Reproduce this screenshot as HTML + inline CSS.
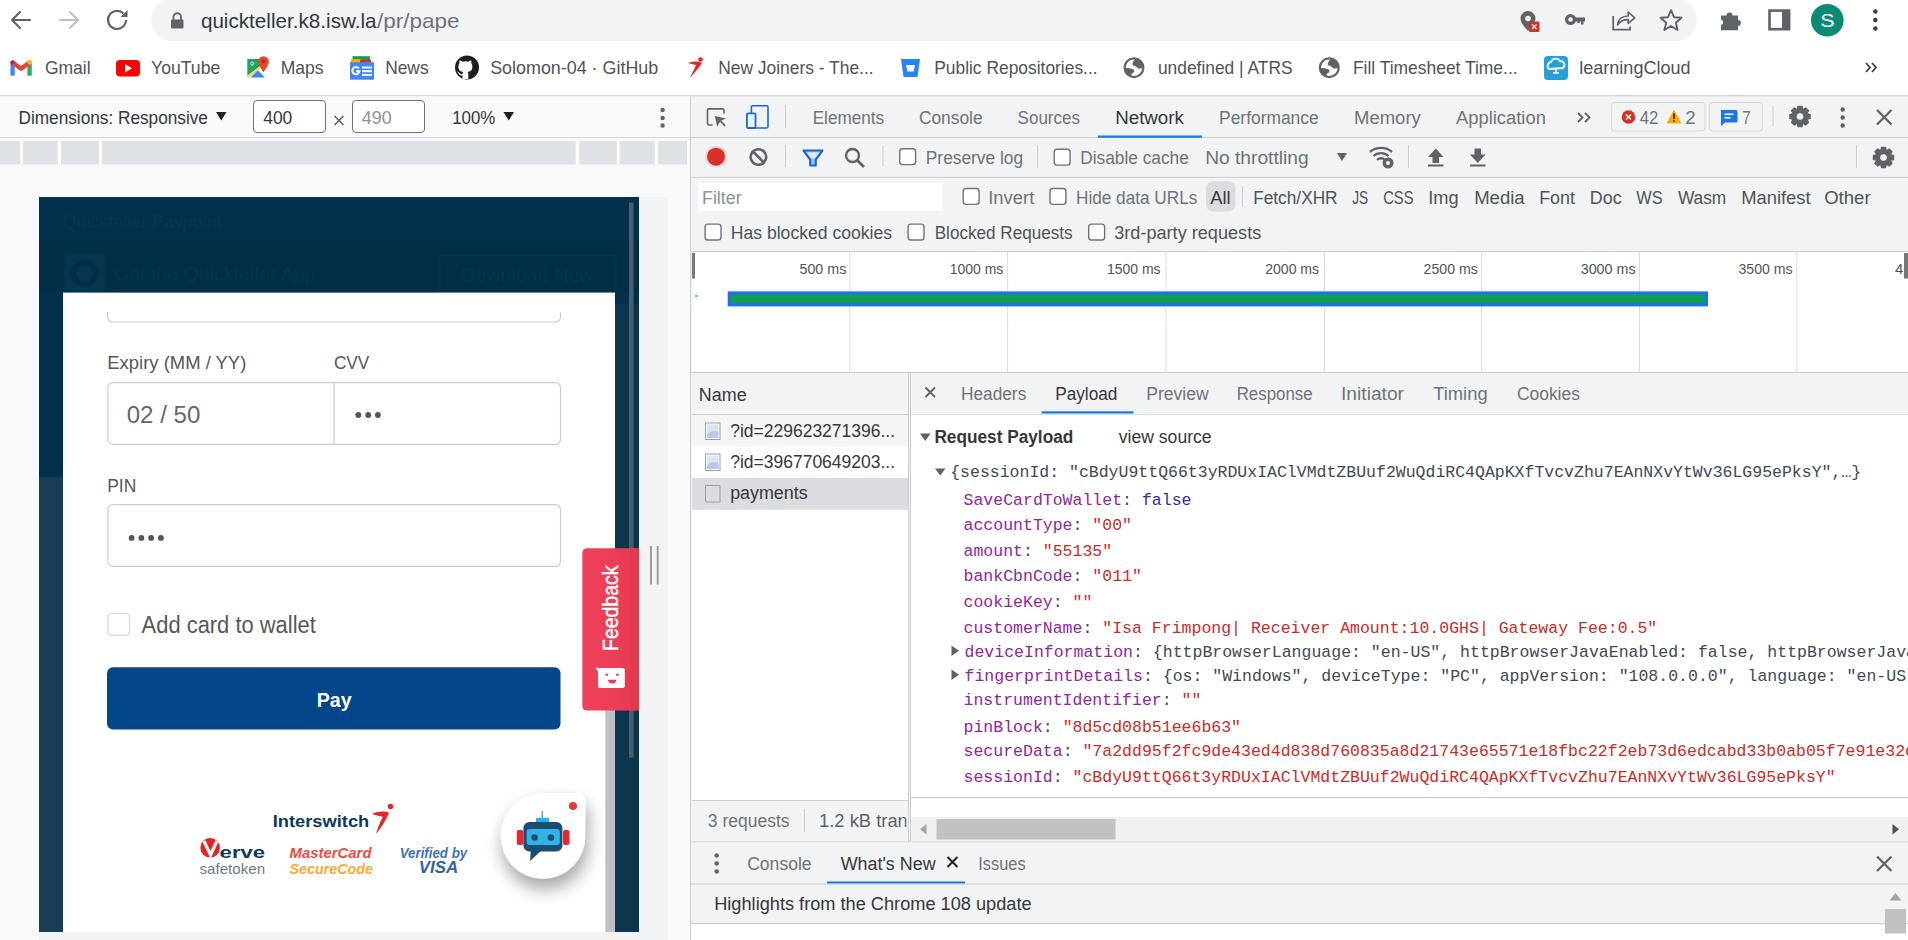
<!DOCTYPE html>
<html><head><meta charset="utf-8"><title>quickteller - DevTools</title>
<style>
html,body{margin:0;padding:0;width:1908px;height:940px;overflow:hidden;background:#fff;}
svg{display:block;font-family:"Liberation Sans",sans-serif;}
</style></head>
<body>
<div id="app" style="position:relative;width:1908px;height:940px;overflow:hidden">
<svg width="1908" height="940" viewBox="0 0 1908 940">
<rect x="0" y="0" width="1908" height="96" fill="#ffffff"/>
<rect x="151" y="-1" width="1546" height="42" fill="#f1f3f4" rx="21"/>
<path d="M30 20 H13 M20 12 L12 20 L20 28" fill="none" stroke="#5f6368" stroke-width="2.2" stroke-linecap="round" stroke-linejoin="round"/>
<path d="M60 20 H77 M70 12 L78 20 L70 28" fill="none" stroke="#bdc1c6" stroke-width="2.2" stroke-linecap="round" stroke-linejoin="round"/>
<path d="M126 20 A9 9 0 1 1 123.4 13.6" fill="none" stroke="#5f6368" stroke-width="2.2"/>
<path d="M127.5 10 L127.5 17 L120.5 17 Z" fill="#5f6368"/>
<rect x="171" y="19.5" width="12.5" height="9" fill="#5f6368" rx="1.2"/>
<path d="M173.5 20 V17 A3.7 3.7 0 0 1 181 17 V20" fill="none" stroke="#5f6368" stroke-width="1.8"/>
<text x="200.9" y="28" font-size="21" fill="#36373a" textLength="175.7" lengthAdjust="spacingAndGlyphs">quickteller.k8.isw.la</text>
<text x="377.0" y="28" font-size="21" fill="#6f7377" textLength="82.6" lengthAdjust="spacingAndGlyphs">/pr/pape</text>
<path d="M1528 11 a7.5 7.5 0 0 0 -7.5 7.5 c0 5 7.5 12.5 7.5 12.5 s7.5 -7.5 7.5 -12.5 a7.5 7.5 0 0 0 -7.5 -7.5z" fill="#5f6368"/>
<circle cx="1528" cy="18.5" r="2.8" fill="#f1f3f4" />
<rect x="1529" y="21.5" width="10.5" height="10.5" fill="#d93025" rx="1"/>
<path d="M1532 24.5 l4.5 4.5 m0 -4.5 l-4.5 4.5" fill="none" stroke="#fff" stroke-width="1.3"/>
<circle cx="1570.5" cy="19.5" r="5.5" fill="#5f6368" />
<circle cx="1570.5" cy="19.5" r="2.3" fill="#f1f3f4" />
<rect x="1575" y="17.5" width="10" height="4" fill="#5f6368"/>
<rect x="1581" y="19" width="2.5" height="5.5" fill="#5f6368"/>
<rect x="1577.5" y="19" width="2.2" height="4" fill="#5f6368"/>
<path d="M1613.2 16 V29.6 H1630 V26.5" fill="none" stroke="#5f6368" stroke-width="1.8"/>
<path d="M1617.5 25 C1618 19.5 1622 16 1628.2 16 V12.2 L1634.8 17.8 L1628.2 23.4 V19.6 C1623 19.6 1619.8 21.5 1617.5 25Z" fill="none" stroke="#5f6368" stroke-width="1.6" stroke-linejoin="round"/>
<path d="M1671 10.2 L1674 17.2 L1681.5 17.8 L1675.8 22.8 L1677.6 30 L1671 26 L1664.4 30 L1666.2 22.8 L1660.5 17.8 L1668 17.2Z" fill="none" stroke="#5f6368" stroke-width="1.9" stroke-linejoin="round"/>
<path d="M1721 15.5 h5.5 a3 3 0 0 1 6 0 h5.5 v4.5 a2.9 2.9 0 0 1 0 5.8 v4.4 h-17 v-5.2 a2.8 2.8 0 0 0 0 -5.5z" fill="#5f6368"/>
<rect x="1769.5" y="10.6" width="19.6" height="18.6" fill="none" stroke="#5f6368" stroke-width="2.6"/>
<rect x="1782" y="10.6" width="7.2" height="18.6" fill="#5f6368"/>
<circle cx="1827.3" cy="20.2" r="16.3" fill="#0b8a74" />
<text x="1820.2" y="27" font-size="18" fill="#ffffff" textLength="14.4" lengthAdjust="spacingAndGlyphs">S</text>
<circle cx="1875.3" cy="11.5" r="2.3" fill="#3c4043" />
<circle cx="1875.3" cy="20" r="2.3" fill="#3c4043" />
<circle cx="1875.3" cy="28.5" r="2.3" fill="#3c4043" />
<path d="M12.6 63 V75.7" fill="none" stroke="#4285f4" stroke-width="4.3"/>
<path d="M29.6 64 V75.7" fill="none" stroke="#34a853" stroke-width="4.3"/>
<path d="M12.6 62.5 L21.1 68.8 L29.6 62.5" fill="none" stroke="#ea4335" stroke-width="4.3" stroke-linecap="round" stroke-linejoin="round"/>
<circle cx="29.6" cy="62.6" r="2.15" fill="#fbbc04" />
<circle cx="12.6" cy="62.6" r="2.15" fill="#c5221f" />
<text x="44.9" y="74" font-size="19" fill="#505356" textLength="45.7" lengthAdjust="spacingAndGlyphs">Gmail</text>
<rect x="116" y="60" width="24" height="16.5" fill="#ff0000" rx="4"/>
<path d="M125 64 L132 68.2 L125 72.4Z" fill="#fff"/>
<text x="151.0" y="74" font-size="19" fill="#505356" textLength="69.3" lengthAdjust="spacingAndGlyphs">YouTube</text>
<path d="M247.3 59 H260 V66.2 L247.3 75.8Z" fill="#1fa463"/>
<path d="M247.3 75.8 L260 66.2 L261.5 67.6 L249 77.5 H247.3Z" fill="#f6d84a"/>
<path d="M250.5 77.5 L257.8 70.2 L265 77.5Z" fill="#4285f4"/>
<path d="M263.5 56.2 a5.4 5.4 0 0 1 5.4 5.4 c0 3.6 -5.4 10.6 -5.4 10.6 s-5.4 -7 -5.4 -10.6 a5.4 5.4 0 0 1 5.4 -5.4z" fill="#ea4335"/>
<circle cx="263.5" cy="61.4" r="1.7" fill="#a52714" />
<circle cx="252.2" cy="63.6" r="1.5" fill="none" stroke="#d8f0e0" stroke-width="1"/>
<text x="280.7" y="74" font-size="19" fill="#505356" textLength="42.9" lengthAdjust="spacingAndGlyphs">Maps</text>
<rect x="352.5" y="56.2" width="17.5" height="5" fill="#0f9d58"/>
<rect x="351" y="59" width="10" height="4" fill="#f9ab00"/>
<rect x="360" y="59.5" width="11" height="4" fill="#d93025"/>
<rect x="350" y="62.2" width="24" height="17.5" fill="#4285f4"/>
<path d="M358.9 68.6 A3.6 3.6 0 1 0 359.5 71.2 H356" fill="none" stroke="#ffffff" stroke-width="2"/>
<rect x="362" y="66.5" width="10" height="2" fill="#ffffff"/>
<rect x="362" y="70.2" width="10" height="2" fill="#ffffff"/>
<rect x="362" y="73.9" width="10" height="2" fill="#ffffff"/>
<text x="385.2" y="74" font-size="19" fill="#505356" textLength="43.4" lengthAdjust="spacingAndGlyphs">News</text>
<circle cx="467" cy="67.5" r="12" fill="#1b1f23" />
<path d="M462.5 79 v-3.5 c-2.5 0.5 -3.5 -1 -4 -2.5 c-0.5 -1 -1.5 -1.3 -1.5 -1.3 c1 -0.5 2 0.5 2.5 1.3 c0.8 1.2 2 1 3 0.7 c0.1 -0.8 0.5 -1.3 0.9 -1.6 c-2.8 -0.3 -5 -1.6 -5 -5.5 c0 -1.2 0.4 -2.2 1.1 -3 c-0.2 -0.5 -0.4 -1.6 0.1 -3 c0 0 1 -0.3 3 1.1 a10 10 0 0 1 5.6 0 c2 -1.4 3 -1.1 3 -1.1 c0.5 1.4 0.3 2.5 0.1 3 c0.7 0.8 1.1 1.8 1.1 3 c0 3.9 -2.2 5.2 -5 5.5 c0.5 0.4 0.9 1.1 0.9 2.2 v4.7z" fill="#ffffff"/>
<text x="490.2" y="74" font-size="19" fill="#505356" textLength="168.0" lengthAdjust="spacingAndGlyphs">Solomon-04 · GitHub</text>
<circle cx="700.5" cy="59.5" r="2.3" fill="#e3262d" />
<path d="M688 63 C693 61 699 61 702 63 C699 68 694 73 690 78 C692 73 695 68 696 65 C693 64 690 64 688 63Z" fill="#e3262d"/>
<text x="718.2" y="74" font-size="19" fill="#505356" textLength="155.4" lengthAdjust="spacingAndGlyphs">New Joiners - The...</text>
<path d="M901 59 H920 L917.5 77 H903.5Z" fill="#2684ff"/>
<path d="M906 65 H915 L913.5 71.5 H907.5Z" fill="#fff"/>
<text x="934.2" y="74" font-size="19" fill="#505356" textLength="163.4" lengthAdjust="spacingAndGlyphs">Public Repositories...</text>
<circle cx="1134" cy="67.7" r="9.4" fill="#ffffff" stroke="#5f6368" stroke-width="2.2"/>
<path d="M1135.5 58.8 C1133.5 61 1132 63 1132.6 65.3 C1134.5 66 1136.5 66.5 1137.6 68.2 C1139 68.8 1141.5 68.7 1143.6 67.2 A9.6 9.6 0 0 0 1135.5 58.8Z" fill="#5f6368"/>
<path d="M1124.2 68 C1127 67.9 1131 68.3 1133.5 69.5 C1135 71 1134 72.6 1132 73.5 C1130.6 74.8 1130.8 76.2 1131.4 77.3 A9.6 9.6 0 0 1 1124.2 68Z" fill="#5f6368"/>
<text x="1157.9" y="74" font-size="19" fill="#505356" textLength="134.7" lengthAdjust="spacingAndGlyphs">undefined | ATRS</text>
<circle cx="1329.3" cy="67.7" r="9.4" fill="#ffffff" stroke="#5f6368" stroke-width="2.2"/>
<path d="M1330.8 58.8 C1328.8 61 1327.3 63 1327.8999999999999 65.3 C1329.8 66 1331.8 66.5 1332.8999999999999 68.2 C1334.3 68.8 1336.8 68.7 1338.8999999999999 67.2 A9.6 9.6 0 0 0 1330.8 58.8Z" fill="#5f6368"/>
<path d="M1319.5 68 C1322.3 67.9 1326.3 68.3 1328.8 69.5 C1330.3 71 1329.3 72.6 1327.3 73.5 C1325.8999999999999 74.8 1326.1 76.2 1326.7 77.3 A9.6 9.6 0 0 1 1319.5 68Z" fill="#5f6368"/>
<text x="1352.9" y="74" font-size="19" fill="#505356" textLength="164.7" lengthAdjust="spacingAndGlyphs">Fill Timesheet Time...</text>
<rect x="1544" y="56" width="24" height="24" fill="#249fdc" rx="4"/>
<path d="M1549 69 a4 4 0 0 1 2 -7 a5 5 0 0 1 9 -1 a4 4 0 0 1 3 7 z" fill="none" stroke="#fff" stroke-width="1.8"/>
<path d="M1556 69 v5 M1553 73 h6" fill="none" stroke="#fff" stroke-width="1.5"/>
<text x="1579.2" y="74" font-size="19" fill="#505356" textLength="111.4" lengthAdjust="spacingAndGlyphs">learningCloud</text>
<path d="M1866 63 l4 4.5 l-4 4.5 M1872 63 l4 4.5 l-4 4.5" fill="none" stroke="#3c4043" stroke-width="1.8"/>
<rect x="0" y="95" width="1908" height="1.6" fill="#d3d5d8"/>
<rect x="0" y="96.6" width="690" height="844" fill="#f8f9fa"/>
<rect x="39" y="197" width="629" height="760" fill="#f1f3f4"/>
<rect x="0" y="96.6" width="690" height="40.6" fill="#f8f9fa"/>
<rect x="0" y="137" width="690" height="1" fill="#dadce0"/>
<text x="18.5" y="124" font-size="18.5" fill="#36373a" textLength="189.4" lengthAdjust="spacingAndGlyphs">Dimensions: Responsive</text>
<path d="M216 112 H226.5 L221.25 120.5Z" fill="#202124"/>
<rect x="253.5" y="100.5" width="72" height="32" fill="#ffffff" rx="3.5" stroke="#6f7377" stroke-width="1"/>
<text x="263.2" y="123.6" font-size="18.5" fill="#36373a" textLength="29.1" lengthAdjust="spacingAndGlyphs">400</text>
<path d="M334.5 116 L343.5 125 M343.5 116 L334.5 125" fill="none" stroke="#5f6368" stroke-width="1.6"/>
<rect x="352.5" y="100.5" width="72" height="32" fill="#ffffff" rx="3.5" stroke="#6f7377" stroke-width="1"/>
<text x="361.8" y="123.6" font-size="18.5" fill="#8d9297" textLength="29.8" lengthAdjust="spacingAndGlyphs">490</text>
<text x="452.2" y="123.6" font-size="18.5" fill="#36373a" textLength="43.1" lengthAdjust="spacingAndGlyphs">100%</text>
<path d="M503.5 112 H514 L508.75 120.5Z" fill="#202124"/>
<circle cx="662.6" cy="110" r="2.2" fill="#5f6368" />
<circle cx="662.6" cy="118" r="2.2" fill="#5f6368" />
<circle cx="662.6" cy="125.5" r="2.2" fill="#5f6368" />
<rect x="0" y="141" width="687" height="23.5" fill="#dee1e6"/>
<rect x="20.2" y="141" width="2.8000000000000007" height="23.5" fill="#ffffff"/>
<rect x="57.8" y="141" width="3.200000000000003" height="23.5" fill="#ffffff"/>
<rect x="99" y="141" width="2.799999999999997" height="23.5" fill="#ffffff"/>
<rect x="575.8" y="141" width="3.400000000000091" height="23.5" fill="#ffffff"/>
<rect x="617" y="141" width="2.6000000000000227" height="23.5" fill="#ffffff"/>
<rect x="654.7" y="141" width="3.2999999999999545" height="23.5" fill="#ffffff"/>
<rect x="39" y="197" width="600" height="735" fill="#03304a"/>
<rect x="39" y="239" width="600" height="53" fill="#022e46"/>
<text x="62.7" y="228" font-size="19" fill="#073651" textLength="158.9" lengthAdjust="spacingAndGlyphs">Quickteller Paypoint</text>
<rect x="64.4" y="253.7" width="40.2" height="38" fill="#053550"/>
<circle cx="84.5" cy="273.5" r="11" fill="#063651" stroke="#022c43" stroke-width="5"/>
<text x="113.9" y="281.4" font-size="21" fill="#05344e" textLength="201.7" lengthAdjust="spacingAndGlyphs">Get the Quickteller App</text>
<rect x="439.5" y="255.5" width="176" height="37" fill="none" stroke="#05344e" stroke-width="2"/>
<text x="461.2" y="282" font-size="20" fill="#05344e" textLength="132.4" lengthAdjust="spacingAndGlyphs">Download Now</text>
<rect x="39" y="477" width="24" height="455" fill="#163e55"/>
<rect x="615" y="304" width="24" height="628" fill="#0c354e"/>
<rect x="634" y="304" width="5" height="628" fill="#093649"/>
<rect x="629" y="202.6" width="4.5" height="555" fill="#4a6070"/>
<rect x="63" y="292.6" width="552" height="639.4" fill="#ffffff"/>
<rect x="605.3" y="560" width="9.7" height="372" fill="#c1c1c1"/>
<path d="M107.5 312 V317 a5 5 0 0 0 5 5 H555.5 a5 5 0 0 0 5 -5 V312" fill="none" stroke="#cccccc" stroke-width="1.2"/>
<text x="107.3" y="368.8" font-size="18" fill="#575757" textLength="139.0" lengthAdjust="spacingAndGlyphs">Expiry (MM / YY)</text>
<text x="333.9" y="368.8" font-size="18" fill="#575757" textLength="35.4" lengthAdjust="spacingAndGlyphs">CVV</text>
<rect x="107.9" y="382.7" width="452.6" height="61.6" fill="#ffffff" rx="5" stroke="#cccccc" stroke-width="1.2"/>
<rect x="333.4" y="382.7" width="1.2" height="61.6" fill="#cccccc"/>
<text x="126.7" y="422.5" font-size="23.5" fill="#666666" textLength="73.7" lengthAdjust="spacingAndGlyphs">02 / 50</text>
<circle cx="358.3" cy="415" r="2.9" fill="#555555" />
<circle cx="368.2" cy="415" r="2.9" fill="#555555" />
<circle cx="377.9" cy="415" r="2.9" fill="#555555" />
<text x="107.2" y="492" font-size="18" fill="#575757" textLength="29.1" lengthAdjust="spacingAndGlyphs">PIN</text>
<rect x="107.9" y="504.7" width="452.6" height="61.6" fill="#ffffff" rx="5" stroke="#cccccc" stroke-width="1.2"/>
<circle cx="131.6" cy="537.9" r="2.9" fill="#555555" />
<circle cx="141.37" cy="537.9" r="2.9" fill="#555555" />
<circle cx="151.14" cy="537.9" r="2.9" fill="#555555" />
<circle cx="160.91" cy="537.9" r="2.9" fill="#555555" />
<rect x="107.9" y="613.5" width="21.6" height="21.8" fill="#ffffff" rx="3.5" stroke="#d6d6d6" stroke-width="1.2"/>
<text x="141.6" y="632.8" font-size="23.5" fill="#575757" textLength="174.2" lengthAdjust="spacingAndGlyphs">Add card to wallet</text>
<rect x="107" y="667.3" width="453.5" height="62.3" fill="#03468a" rx="6"/>
<text x="316.7" y="706.5" font-size="20.5" fill="#ffffff" font-weight="bold" textLength="34.9" lengthAdjust="spacingAndGlyphs">Pay</text>
<text x="272.8" y="827.2" font-size="16" fill="#0d3a5c" font-weight="bold" textLength="96.4" lengthAdjust="spacingAndGlyphs">Interswitch</text>
<circle cx="390.5" cy="806.5" r="2.8" fill="#e3262d" />
<path d="M372 814 C378 811 386 811 389 813 C386 820 381 828 376 834 C378 827 381 820 383 817 C379 816 375 815 372 814Z" fill="#e3262d"/>
<circle cx="210.2" cy="847.8" r="9.8" fill="#e52421" />
<path d="M204 841 L210.5 855 L217 841" fill="none" stroke="#ffffff" stroke-width="3.2"/>
<text x="219.6" y="857.6" font-size="16.5" fill="#0d3a5c" font-weight="bold" textLength="45.5" lengthAdjust="spacingAndGlyphs">erve</text>
<text x="199.5" y="874.4" font-size="14.5" fill="#6d7b86" textLength="65.6" lengthAdjust="spacingAndGlyphs">safetoken</text>
<text x="289.5" y="857.6" font-size="15" fill="#ea4c41" font-weight="bold" textLength="82.0" lengthAdjust="spacingAndGlyphs" font-style="italic">MasterCard</text>
<text x="289.5" y="873.6" font-size="15" fill="#f7aa34" font-weight="bold" textLength="83.5" lengthAdjust="spacingAndGlyphs" font-style="italic">SecureCode</text>
<text x="399.7" y="857.6" font-size="14.5" fill="#3b72b5" font-weight="bold" textLength="67.5" lengthAdjust="spacingAndGlyphs" font-style="italic">Verified by</text>
<text x="418.7" y="872.8" font-size="16" fill="#3461a6" font-weight="bold" textLength="39.4" lengthAdjust="spacingAndGlyphs" font-style="italic">VISA</text>
<defs><filter id="sh" x="-50%" y="-50%" width="200%" height="200%"><feGaussianBlur stdDeviation="9"/></filter></defs>
<path d="M543 800 a43 43 0 1 0 0 0z" fill="#000" opacity="0"/>
<path d="M500.5 836 A42.5 43 0 0 1 543 793 H578 a7.5 7.5 0 0 1 7.5 7.5 V836 A42.5 43 0 0 1 500.5 836Z" fill="#000" opacity="0.36" filter="url(#sh)" transform="translate(2,10)"/>
<path d="M500.5 836 A42.5 43 0 0 1 543 793 H578 a7.5 7.5 0 0 1 7.5 7.5 V836 A42.5 43 0 0 1 500.5 836Z" fill="#ffffff"/>
<circle cx="573" cy="806" r="4" fill="#e53935" />
<rect x="516.8" y="830" width="6.5" height="15" fill="#e8262b" rx="2"/>
<rect x="563" y="830" width="6.5" height="15" fill="#e8262b" rx="2"/>
<path d="M542.3 811 V819" fill="none" stroke="#2fb5e3" stroke-width="1.5"/>
<rect x="536" y="817.7" width="13" height="5" fill="#2fb5e3" rx="1"/>
<rect x="523.4" y="822" width="39" height="29.5" fill="#1d4c72" rx="6"/>
<path d="M531 848 L530 861 L542 850Z" fill="#1d4c72"/>
<rect x="526.6" y="829" width="33.2" height="16" fill="#2fb5e3" rx="3"/>
<circle cx="534.6" cy="837.5" r="3.3" fill="#1d4c72" />
<circle cx="550.9" cy="837.5" r="3.3" fill="#1d4c72" />
<defs><linearGradient id="fb" x1="0" y1="0" x2="1" y2="0"><stop offset="0" stop-color="#f0425a"/><stop offset="0.7" stop-color="#ea3d55"/><stop offset="1" stop-color="#e0374e"/></linearGradient></defs>
<rect x="582.3" y="548.3" width="56.7" height="162.3" fill="url(#fb)" rx="4.5"/>
<rect x="630" y="548.3" width="9" height="162.3" fill="#e3394f"/>
<text x="618.3" y="651" font-size="22" fill="#ffffff" stroke="#ffffff" stroke-width="0.45" textLength="85.5" lengthAdjust="spacingAndGlyphs" transform="rotate(-90 618.3 651)">Feedback</text>
<path d="M595.4 667 L598 668 H622.8 a2 2 0 0 1 2 2 V686 a2 2 0 0 1 -2 2 H600 a2 2 0 0 1 -2 -2 V672Z" fill="#ffffff"/>
<circle cx="606.8" cy="674.8" r="1.3" fill="#ea3d55" />
<circle cx="617.4" cy="674.8" r="1.3" fill="#ea3d55" />
<path d="M608 679.8 a4.2 3.6 0 0 0 8.4 0z" fill="#ea3d55"/>
<rect x="650" y="546" width="2" height="38.5" fill="#9aa0a6"/>
<rect x="656.7" y="546" width="2" height="38.5" fill="#9aa0a6"/>
<rect x="690" y="96.6" width="1" height="844" fill="#cacdd1"/>
<rect x="691" y="96.6" width="1217" height="844" fill="#f1f3f4"/>
<rect x="691" y="137" width="1217" height="1" fill="#cacdd1"/>
<rect x="691" y="176.8" width="1217" height="1" fill="#cacdd1"/>
<path d="M712.6 125 H709 a1.5 1.5 0 0 1 -1.5 -1.5 V110.4 a1.5 1.5 0 0 1 1.5 -1.5 H722.5 a1.5 1.5 0 0 1 1.5 1.5 V113.4" fill="none" stroke="#5f6368" stroke-width="1.6"/>
<path d="M714.9 116.1 L726 118.6 L721.2 120.4 L725.8 125.2 L724.6 126.6 L720 121.8 L717.2 126.8Z" fill="#5f6368"/>
<rect x="751.4" y="105.8" width="16.6" height="22.2" fill="#f1f3f4" rx="1.3" stroke="#1a66d9" stroke-width="1.6"/>
<rect x="746.9" y="113.4" width="8.6" height="14.6" fill="#eef5fe" rx="1.3" stroke="#1a66d9" stroke-width="1.8"/>
<rect x="785" y="105" width="1" height="23" fill="#cacdd1"/>
<text x="812.7" y="124.3" font-size="18" fill="#6f7377" textLength="71.4" lengthAdjust="spacingAndGlyphs">Elements</text>
<text x="918.9" y="124.3" font-size="18" fill="#6f7377" textLength="63.7" lengthAdjust="spacingAndGlyphs">Console</text>
<text x="1017.6" y="124.3" font-size="18" fill="#6f7377" textLength="62.4" lengthAdjust="spacingAndGlyphs">Sources</text>
<text x="1115.2" y="124.3" font-size="18" fill="#36373a" textLength="68.7" lengthAdjust="spacingAndGlyphs">Network</text>
<rect x="1098" y="135.5" width="104" height="2.2" fill="#1a73e8"/>
<text x="1219.1" y="124.3" font-size="18" fill="#6f7377" textLength="99.5" lengthAdjust="spacingAndGlyphs">Performance</text>
<text x="1354.0" y="124.3" font-size="18" fill="#6f7377" textLength="66.8" lengthAdjust="spacingAndGlyphs">Memory</text>
<text x="1456.0" y="124.3" font-size="18" fill="#6f7377" textLength="89.9" lengthAdjust="spacingAndGlyphs">Application</text>
<path d="M1578 113 l4.5 4.5 l-4.5 4.5 M1585 113 l4.5 4.5 l-4.5 4.5" fill="none" stroke="#5f6368" stroke-width="1.8"/>
<rect x="1611.5" y="102.5" width="93.5" height="28.5" fill="none" rx="3" stroke="#d5d7db" stroke-width="1"/>
<circle cx="1628.5" cy="117" r="6.8" fill="#d93025" />
<path d="M1626 114.5 l5 5 m0 -5 l-5 5" fill="none" stroke="#fff" stroke-width="1.4"/>
<text x="1639.7" y="124" font-size="18" fill="#6f7377" textLength="18.6" lengthAdjust="spacingAndGlyphs">42</text>
<path d="M1674 109.5 L1681.5 123.5 H1666.5Z" fill="#f9ab00"/>
<rect x="1673.2" y="113.5" width="1.6" height="5.5" fill="#202124"/>
<rect x="1673.2" y="120.3" width="1.6" height="1.6" fill="#202124"/>
<text x="1685.2" y="124" font-size="18" fill="#6f7377" textLength="10.4" lengthAdjust="spacingAndGlyphs">2</text>
<rect x="1709.5" y="102.5" width="53" height="28.5" fill="none" rx="3" stroke="#d5d7db" stroke-width="1"/>
<path d="M1721 110 h15 a1.5 1.5 0 0 1 1.5 1.5 v9.5 a1.5 1.5 0 0 1 -1.5 1.5 h-11 l-4 3.5z" fill="#1a73e8"/>
<rect x="1724.5" y="113.5" width="9" height="1.6" fill="#fff"/>
<rect x="1724.5" y="117" width="6" height="1.6" fill="#fff"/>
<text x="1742.2" y="124" font-size="18" fill="#6f7377" textLength="8.4" lengthAdjust="spacingAndGlyphs">7</text>
<rect x="1772.5" y="106" width="1" height="21" fill="#cacdd1"/>
<path d="M1810.73 114.10 L1810.73 118.90 L1807.43 119.82 L1807.60 119.41 L1809.29 122.39 L1805.89 125.79 L1802.91 124.10 L1803.32 123.93 L1802.40 127.23 L1797.60 127.23 L1796.68 123.93 L1797.09 124.10 L1794.11 125.79 L1790.71 122.39 L1792.40 119.41 L1792.57 119.82 L1789.27 118.90 L1789.27 114.10 L1792.57 113.18 L1792.40 113.59 L1790.71 110.61 L1794.11 107.21 L1797.09 108.90 L1796.68 109.07 L1797.60 105.77 L1802.40 105.77 L1803.32 109.07 L1802.91 108.90 L1805.89 107.21 L1809.29 110.61 L1807.60 113.59 L1807.43 113.18Z" fill="#5f6368"/>
<circle cx="1800" cy="116.5" r="3.3" fill="#f1f3f4" />
<circle cx="1842.7" cy="109.5" r="2.2" fill="#5f6368" />
<circle cx="1842.7" cy="117.5" r="2.2" fill="#5f6368" />
<circle cx="1842.7" cy="125.5" r="2.2" fill="#5f6368" />
<path d="M1877 110 L1891.5 124.5 M1891.5 110 L1877 124.5" fill="none" stroke="#5f6368" stroke-width="2.2"/>
<circle cx="716" cy="156.7" r="11" fill="#f4c7c3" opacity="0.6"/>
<circle cx="716" cy="156.7" r="9" fill="#d93025" />
<circle cx="758.4" cy="157" r="7.8" fill="none" stroke="#5f6368" stroke-width="2.6"/>
<line x1="753" y1="151.5" x2="764" y2="162.5" stroke="#5f6368" stroke-width="2.6" />
<rect x="785" y="145" width="1" height="22" fill="#cacdd1"/>
<path d="M803.5 150.5 H822.5 L815.8 159.5 V165.5 H810.2 V159.5Z" fill="#9cc0f5" stroke="#1a66d9" stroke-width="2.2" stroke-linejoin="round"/>
<path d="M806.5 152.6 H819.5 L815 158.2 H811Z" fill="#e3edfc"/>
<circle cx="852.5" cy="155.5" r="6.5" fill="none" stroke="#5f6368" stroke-width="2.4"/>
<line x1="857" y1="160" x2="864" y2="167" stroke="#5f6368" stroke-width="2.6" />
<rect x="882.5" y="145" width="1" height="22" fill="#cacdd1"/>
<rect x="899.7" y="148.7" width="15.9" height="15.9" fill="#ffffff" rx="2.8" stroke="#6f7377" stroke-width="1.4"/>
<text x="925.8" y="164" font-size="18" fill="#6f7377" textLength="97.3" lengthAdjust="spacingAndGlyphs">Preserve log</text>
<rect x="1037" y="145" width="1" height="23" fill="#cacdd1"/>
<rect x="1054.2" y="149.2" width="15.9" height="15.9" fill="#ffffff" rx="2.8" stroke="#6f7377" stroke-width="1.4"/>
<text x="1080.2" y="164" font-size="18" fill="#6f7377" textLength="108.6" lengthAdjust="spacingAndGlyphs">Disable cache</text>
<text x="1205.2" y="164" font-size="18" fill="#6f7377" textLength="103.4" lengthAdjust="spacingAndGlyphs">No throttling</text>
<path d="M1337 153 H1347 L1342 161Z" fill="#5f6368"/>
<path d="M1370 152 a17 17 0 0 1 22 0 M1373.5 156 a11 11 0 0 1 15 0 M1377 160 a5.5 5.5 0 0 1 8 0" fill="none" stroke="#5f6368" stroke-width="2.3"/>
<circle cx="1388" cy="163" r="5.5" fill="#5f6368" />
<circle cx="1388" cy="163" r="2" fill="#f1f3f4" />
<rect x="1408" y="145" width="1" height="23" fill="#cacdd1"/>
<path d="M1435.8 148.5 L1443.5 157 H1439 V163 H1432.5 V157 H1428Z" fill="#5f6368"/>
<rect x="1428" y="164.5" width="15.5" height="2" fill="#5f6368"/>
<path d="M1477.8 163 L1470 154.5 H1474.5 V148.5 H1481 V154.5 H1485.5Z" fill="#5f6368"/>
<rect x="1470" y="164.5" width="15.5" height="2" fill="#5f6368"/>
<rect x="1856" y="145" width="1" height="23" fill="#cacdd1"/>
<path d="M1894.23 155.10 L1894.23 159.90 L1890.93 160.82 L1891.10 160.41 L1892.79 163.39 L1889.39 166.79 L1886.41 165.10 L1886.82 164.93 L1885.90 168.23 L1881.10 168.23 L1880.18 164.93 L1880.59 165.10 L1877.61 166.79 L1874.21 163.39 L1875.90 160.41 L1876.07 160.82 L1872.77 159.90 L1872.77 155.10 L1876.07 154.18 L1875.90 154.59 L1874.21 151.61 L1877.61 148.21 L1880.59 149.90 L1880.18 150.07 L1881.10 146.77 L1885.90 146.77 L1886.82 150.07 L1886.41 149.90 L1889.39 148.21 L1892.79 151.61 L1891.10 154.59 L1890.93 154.18Z" fill="#5f6368"/>
<circle cx="1883.5" cy="157.5" r="3.3" fill="#f1f3f4" />
<rect x="698" y="183" width="244.5" height="27.5" fill="#ffffff"/>
<text x="702.0" y="203.7" font-size="18" fill="#8d9297" textLength="39.6" lengthAdjust="spacingAndGlyphs">Filter</text>
<rect x="963.2" y="188.5" width="15.9" height="15.9" fill="#ffffff" rx="2.8" stroke="#6f7377" stroke-width="1.4"/>
<text x="988.2" y="203.5" font-size="18" fill="#6f7377" textLength="46.1" lengthAdjust="spacingAndGlyphs">Invert</text>
<rect x="1050.0" y="188.5" width="15.9" height="15.9" fill="#ffffff" rx="2.8" stroke="#6f7377" stroke-width="1.4"/>
<text x="1076.0" y="203.5" font-size="18" fill="#6f7377" textLength="121.3" lengthAdjust="spacingAndGlyphs">Hide data URLs</text>
<rect x="1206" y="181.5" width="29.5" height="30" fill="#dadce0" rx="7"/>
<text x="1210.2" y="203.5" font-size="18" fill="#36373a" textLength="20.4" lengthAdjust="spacingAndGlyphs">All</text>
<rect x="1242" y="186" width="1" height="21" fill="#cacdd1"/>
<text x="1253.2" y="203.5" font-size="18" fill="#505356" textLength="84.4" lengthAdjust="spacingAndGlyphs">Fetch/XHR</text>
<text x="1352.2" y="203.5" font-size="18" fill="#505356" textLength="16.1" lengthAdjust="spacingAndGlyphs">JS</text>
<text x="1383.2" y="203.5" font-size="18" fill="#505356" textLength="30.4" lengthAdjust="spacingAndGlyphs">CSS</text>
<text x="1428.2" y="203.5" font-size="18" fill="#505356" textLength="30.4" lengthAdjust="spacingAndGlyphs">Img</text>
<text x="1474.2" y="203.5" font-size="18" fill="#505356" textLength="50.4" lengthAdjust="spacingAndGlyphs">Media</text>
<text x="1539.2" y="203.5" font-size="18" fill="#505356" textLength="35.8" lengthAdjust="spacingAndGlyphs">Font</text>
<text x="1589.8" y="203.5" font-size="18" fill="#505356" textLength="31.8" lengthAdjust="spacingAndGlyphs">Doc</text>
<text x="1636.2" y="203.5" font-size="18" fill="#505356" textLength="26.4" lengthAdjust="spacingAndGlyphs">WS</text>
<text x="1677.9" y="203.5" font-size="18" fill="#505356" textLength="48.4" lengthAdjust="spacingAndGlyphs">Wasm</text>
<text x="1741.2" y="203.5" font-size="18" fill="#505356" textLength="69.4" lengthAdjust="spacingAndGlyphs">Manifest</text>
<text x="1824.2" y="203.5" font-size="18" fill="#505356" textLength="46.4" lengthAdjust="spacingAndGlyphs">Other</text>
<rect x="705.1" y="224.1" width="15.9" height="15.9" fill="#ffffff" rx="2.8" stroke="#6f7377" stroke-width="1.4"/>
<text x="730.8" y="238.9" font-size="18" fill="#505356" textLength="161.2" lengthAdjust="spacingAndGlyphs">Has blocked cookies</text>
<rect x="908.1" y="224.1" width="15.9" height="15.9" fill="#ffffff" rx="2.8" stroke="#6f7377" stroke-width="1.4"/>
<text x="934.7" y="238.9" font-size="18" fill="#505356" textLength="137.9" lengthAdjust="spacingAndGlyphs">Blocked Requests</text>
<rect x="1088.7" y="224.1" width="15.9" height="15.9" fill="#ffffff" rx="2.8" stroke="#6f7377" stroke-width="1.4"/>
<text x="1114.2" y="238.9" font-size="18" fill="#505356" textLength="147.1" lengthAdjust="spacingAndGlyphs">3rd-party requests</text>
<rect x="691" y="251" width="1217" height="1" fill="#cacdd1"/>
<rect x="692" y="252" width="1216" height="120.5" fill="#ffffff"/>
<rect x="849.2" y="252" width="1" height="120.5" fill="#dddddd"/>
<rect x="1007.1" y="252" width="1" height="120.5" fill="#dddddd"/>
<rect x="1165.4" y="252" width="1" height="120.5" fill="#dddddd"/>
<rect x="1324" y="252" width="1" height="120.5" fill="#dddddd"/>
<rect x="1481" y="252" width="1" height="120.5" fill="#dddddd"/>
<rect x="1639" y="252" width="1" height="120.5" fill="#dddddd"/>
<rect x="1796.3" y="252" width="1" height="120.5" fill="#dddddd"/>
<text x="799.5" y="274" font-size="15" fill="#505356" textLength="46.8" lengthAdjust="spacingAndGlyphs">500 ms</text>
<text x="949.8" y="274" font-size="15" fill="#505356" textLength="53.5" lengthAdjust="spacingAndGlyphs">1000 ms</text>
<text x="1107.0" y="274" font-size="15" fill="#505356" textLength="53.6" lengthAdjust="spacingAndGlyphs">1500 ms</text>
<text x="1265.2" y="274" font-size="15" fill="#505356" textLength="53.9" lengthAdjust="spacingAndGlyphs">2000 ms</text>
<text x="1423.6" y="274" font-size="15" fill="#505356" textLength="54.2" lengthAdjust="spacingAndGlyphs">2500 ms</text>
<text x="1580.7" y="274" font-size="15" fill="#505356" textLength="54.9" lengthAdjust="spacingAndGlyphs">3000 ms</text>
<text x="1738.5" y="274" font-size="15" fill="#505356" textLength="54.1" lengthAdjust="spacingAndGlyphs">3500 ms</text>
<text x="1895" y="274" font-size="15" fill="#505356">4</text>
<rect x="692" y="253" width="3" height="25.5" fill="#777777"/>
<rect x="1904" y="253" width="4" height="25.5" fill="#777777"/>
<rect x="727.7" y="291.4" width="980.3" height="15" fill="#1a73e8"/>
<rect x="731" y="294.4" width="973.5" height="9" fill="#0f9d58"/>
<rect x="695" y="295" width="3" height="2" fill="#6cc6b8"/>
<rect x="691" y="372" width="1217" height="1" fill="#cacdd1"/>
<rect x="692" y="373" width="216" height="41.5" fill="#f1f3f4"/>
<text x="698.8" y="400.8" font-size="18" fill="#36373a" textLength="47.8" lengthAdjust="spacingAndGlyphs">Name</text>
<rect x="692" y="414" width="1216" height="1" fill="#cacdd1"/>
<rect x="692" y="415" width="216" height="385" fill="#ffffff"/>
<rect x="692" y="415" width="216" height="31.5" fill="#f5f5f5"/>
<rect x="692" y="477.8" width="216" height="32" fill="#dadce0"/>
<rect x="908" y="373" width="1" height="468" fill="#cacdd1"/>
<rect x="910" y="373" width="1" height="468" fill="#cacdd1"/>
<rect x="909" y="373" width="1" height="468" fill="#f1f3f4"/>
<rect x="705.5" y="423.0" width="14.5" height="16.5" fill="#ffffff" stroke="#9aa0a6" stroke-width="1"/>
<rect x="707" y="424.5" width="11.5" height="13.5" fill="#dbe4f1"/>
<path d="M707 434.5 q4 -5 11.5 -3 v6.5 h-11.5z" fill="#b6c9e6"/>
<rect x="705.5" y="454.0" width="14.5" height="16.5" fill="#ffffff" stroke="#9aa0a6" stroke-width="1"/>
<rect x="707" y="455.5" width="11.5" height="13.5" fill="#dbe4f1"/>
<path d="M707 465.5 q4 -5 11.5 -3 v6.5 h-11.5z" fill="#b6c9e6"/>
<rect x="705.5" y="485.5" width="14.5" height="16.5" fill="none" stroke="#9aa0a6" stroke-width="1"/>
<text x="730.2" y="436.6" font-size="18" fill="#36373a" textLength="164.9" lengthAdjust="spacingAndGlyphs">?id=229623271396...</text>
<text x="730.2" y="468" font-size="18" fill="#36373a" textLength="164.9" lengthAdjust="spacingAndGlyphs">?id=396770649203...</text>
<text x="730.2" y="499.3" font-size="18" fill="#36373a" textLength="77.4" lengthAdjust="spacingAndGlyphs">payments</text>
<rect x="692" y="800" width="216" height="1" fill="#cacdd1"/>
<text x="707.8" y="827" font-size="18" fill="#6f7377" textLength="81.7" lengthAdjust="spacingAndGlyphs">3 requests</text>
<rect x="804" y="809" width="1" height="23" fill="#cacdd1"/>
<svg x="692" y="800" width="214.5" height="41" overflow="hidden"><text x="127" y="27" font-size="18" fill="#5f6368" textLength="146" lengthAdjust="spacingAndGlyphs">1.2 kB transferred</text></svg>
<rect x="911" y="373" width="997" height="41.5" fill="#f1f3f4"/>
<path d="M925.5 387.5 L935 397 M935 387.5 L925.5 397" fill="none" stroke="#5f6368" stroke-width="1.8"/>
<text x="960.9" y="400" font-size="18" fill="#6f7377" textLength="65.4" lengthAdjust="spacingAndGlyphs">Headers</text>
<text x="1055.2" y="400" font-size="18" fill="#36373a" textLength="62.2" lengthAdjust="spacingAndGlyphs">Payload</text>
<rect x="1041.7" y="411.3" width="91.7" height="2.2" fill="#1a73e8"/>
<text x="1146.2" y="400" font-size="18" fill="#6f7377" textLength="62.4" lengthAdjust="spacingAndGlyphs">Preview</text>
<text x="1236.7" y="400" font-size="18" fill="#6f7377" textLength="75.9" lengthAdjust="spacingAndGlyphs">Response</text>
<text x="1341.0" y="400" font-size="18" fill="#6f7377" textLength="63.0" lengthAdjust="spacingAndGlyphs">Initiator</text>
<text x="1433.2" y="400" font-size="18" fill="#6f7377" textLength="54.4" lengthAdjust="spacingAndGlyphs">Timing</text>
<text x="1516.9" y="400" font-size="18" fill="#6f7377" textLength="63.0" lengthAdjust="spacingAndGlyphs">Cookies</text>
<rect x="911" y="415" width="997" height="382" fill="#ffffff"/>
<rect x="911" y="797" width="997" height="1" fill="#cacdd1"/>
<rect x="911" y="798" width="997" height="19" fill="#ffffff"/>
<rect x="911" y="817" width="997" height="24" fill="#f1f1f1"/>
<rect x="936.5" y="819" width="179" height="20.5" fill="#c1c1c1"/>
<path d="M926.5 824 V834.5 L920 829.2Z" fill="#a3a3a3"/>
<path d="M1892.5 824 V834.5 L1899 829.2Z" fill="#505050"/>
<path d="M920 433.5 H930.5 L925.25 441Z" fill="#5f6368"/>
<text x="934.4" y="442.6" font-size="18" fill="#36373a" font-weight="bold" textLength="138.9" lengthAdjust="spacingAndGlyphs">Request Payload</text>
<text x="1118.8" y="442.6" font-size="18" fill="#36373a" textLength="92.8" lengthAdjust="spacingAndGlyphs">view source</text>
<path d="M935 468.5 H945.5 L940.25 475.5Z" fill="#5f6368"/>
<text x="950.2" y="477" style="font-family:'Liberation Mono'" font-size="16.52" xml:space="preserve" textLength="911" lengthAdjust="spacingAndGlyphs"><tspan fill="#414951">{sessionId: "cBdyU9ttQ66t3yRDUxIAClVMdtZBUuf2WuQdiRC4QApKXfTvcvZhu7EAnNXvYtWv36LG95ePksY",…}</tspan></text>
<text x="963.5" y="504.5" style="font-family:'Liberation Mono'" font-size="16.52" xml:space="preserve"><tspan fill="#92269a">SaveCardToWallet</tspan><tspan fill="#414951">: </tspan><tspan fill="#2c2cad">false</tspan></text>
<text x="963.5" y="530.4" style="font-family:'Liberation Mono'" font-size="16.52" xml:space="preserve"><tspan fill="#92269a">accountType</tspan><tspan fill="#414951">: </tspan><tspan fill="#c92c29">"00"</tspan></text>
<text x="963.5" y="555.5" style="font-family:'Liberation Mono'" font-size="16.52" xml:space="preserve"><tspan fill="#92269a">amount</tspan><tspan fill="#414951">: </tspan><tspan fill="#c92c29">"55135"</tspan></text>
<text x="963.5" y="581.4" style="font-family:'Liberation Mono'" font-size="16.52" xml:space="preserve"><tspan fill="#92269a">bankCbnCode</tspan><tspan fill="#414951">: </tspan><tspan fill="#c92c29">"011"</tspan></text>
<text x="963.5" y="607.2" style="font-family:'Liberation Mono'" font-size="16.52" xml:space="preserve"><tspan fill="#92269a">cookieKey</tspan><tspan fill="#414951">: </tspan><tspan fill="#c92c29">""</tspan></text>
<text x="963.5" y="632.7" style="font-family:'Liberation Mono'" font-size="16.52" xml:space="preserve"><tspan fill="#92269a">customerName</tspan><tspan fill="#414951">: </tspan><tspan fill="#c92c29">"Isa Frimpong| Receiver Amount:10.0GHS| Gateway Fee:0.5"</tspan></text>
<text x="964.5" y="656.6" style="font-family:'Liberation Mono'" font-size="16.52" xml:space="preserve"><tspan fill="#92269a">deviceInformation</tspan><tspan fill="#414951">: </tspan><tspan fill="#414951">{httpBrowserLanguage: "en-US", httpBrowserJavaEnabled: false, httpBrowserJavaScriptEnabled: true}</tspan></text>
<text x="964.5" y="680.8" style="font-family:'Liberation Mono'" font-size="16.52" xml:space="preserve"><tspan fill="#92269a">fingerprintDetails</tspan><tspan fill="#414951">: </tspan><tspan fill="#414951">{os: "Windows", deviceType: "PC", appVersion: "108.0.0.0", language: "en-US"}</tspan></text>
<text x="963.5" y="705.1" style="font-family:'Liberation Mono'" font-size="16.52" xml:space="preserve"><tspan fill="#92269a">instrumentIdentifier</tspan><tspan fill="#414951">: </tspan><tspan fill="#c92c29">""</tspan></text>
<text x="963.5" y="731.7" style="font-family:'Liberation Mono'" font-size="16.52" xml:space="preserve"><tspan fill="#92269a">pinBlock</tspan><tspan fill="#414951">: </tspan><tspan fill="#c92c29">"8d5cd08b51ee6b63"</tspan></text>
<text x="963.5" y="756.3" style="font-family:'Liberation Mono'" font-size="16.52" xml:space="preserve"><tspan fill="#92269a">secureData</tspan><tspan fill="#414951">: </tspan><tspan fill="#c92c29">"7a2dd95f2fc9de43ed4d838d760835a8d21743e65571e18fbc22f2eb73d6edcabd33b0ab05f7e91e32c0"</tspan></text>
<text x="963.5" y="781.6" style="font-family:'Liberation Mono'" font-size="16.52" xml:space="preserve"><tspan fill="#92269a">sessionId</tspan><tspan fill="#414951">: </tspan><tspan fill="#c92c29">"cBdyU9ttQ66t3yRDUxIAClVMdtZBUuf2WuQdiRC4QApKXfTvcvZhu7EAnNXvYtWv36LG95ePksY"</tspan></text>
<path d="M951.5 645.5 V656 L959 650.75Z" fill="#5f6368"/>
<path d="M951.5 669.5 V680 L959 674.75Z" fill="#5f6368"/>
<rect x="1908" y="373" width="10" height="470" fill="#ffffff"/>
<rect x="691" y="841.5" width="1217" height="1" fill="#cacdd1"/>
<rect x="691" y="842.5" width="1217" height="41" fill="#f1f3f4"/>
<circle cx="716.7" cy="855.5" r="2.2" fill="#5f6368" />
<circle cx="716.7" cy="863.5" r="2.2" fill="#5f6368" />
<circle cx="716.7" cy="871.5" r="2.2" fill="#5f6368" />
<text x="747.2" y="870.3" font-size="18" fill="#6f7377" textLength="64.4" lengthAdjust="spacingAndGlyphs">Console</text>
<text x="840.7" y="870.3" font-size="18" fill="#36373a" textLength="94.9" lengthAdjust="spacingAndGlyphs">What's New</text>
<path d="M947.5 857 L957.5 867 M957.5 857 L947.5 867" fill="none" stroke="#202124" stroke-width="2"/>
<rect x="827" y="881.5" width="138" height="2.2" fill="#1a73e8"/>
<text x="978.2" y="870.3" font-size="18" fill="#6f7377" textLength="47.4" lengthAdjust="spacingAndGlyphs">Issues</text>
<path d="M1877 856.5 L1891.5 871 M1891.5 856.5 L1877 871" fill="none" stroke="#5f6368" stroke-width="2.2"/>
<rect x="691" y="883.5" width="1217" height="1" fill="#cacdd1"/>
<text x="714.2" y="910" font-size="18" fill="#36373a" textLength="317.4" lengthAdjust="spacingAndGlyphs">Highlights from the Chrome 108 update</text>
<rect x="691" y="923" width="1217" height="1" fill="#cacdd1"/>
<rect x="691" y="924" width="1217" height="16" fill="#ffffff"/>
<path d="M1889.5 900.5 H1901.5 L1895.5 893Z" fill="#a3a3a3"/>
<rect x="1885" y="909" width="21" height="24.5" fill="#c1c1c1"/>
</svg>
</div>
</body></html>
